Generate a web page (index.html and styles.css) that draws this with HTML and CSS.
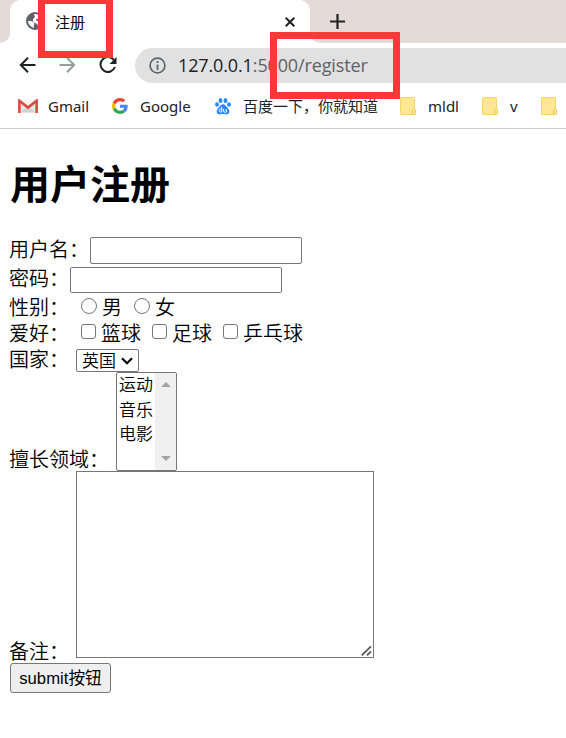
FILE: index.html
```
<!DOCTYPE html>
<html lang="zh-CN">
<head>
<meta charset="utf-8">
<title>注册</title>
<link rel="stylesheet" href="styles.css">
</head>
<body>
<header class="browser">
  <div class="tabs">
    <div class="tab-edge left"></div>
    <div class="tab">
      <svg class="globe" width="18" height="18" viewBox="0 0 18 18"><circle cx="9" cy="9" r="9" fill="#5f6368"/><path d="M2 9c3 0 5 0 6 2s-1 2 0 5c-3-1-6-4-6-7zM9 2l5 1v2c-2 0-1 2-3 2s-1 2 1 2h4l-1 4-3 2c0-3-1-3-3-4s-3-3-1-5 0-2 0-4z" fill="#fff"/></svg>
      <span class="tab-title">注册</span>
      <svg class="close" width="10" height="10" viewBox="0 0 10 10"><path d="M.7.7l8.6 8.6M9.3.7L.7 9.3" stroke="#222" stroke-width="2"/></svg>
    </div>
    <div class="tab-edge right"></div>
    <svg class="plus" width="15" height="15" viewBox="0 0 15 15"><path d="M7.5 0v15M0 7.5h15" stroke="#222" stroke-width="2.2"/></svg>
  </div>
  <div class="toolbar">
    <svg width="17" height="16" viewBox="0 0 17 16" fill="none" stroke="#202124" stroke-width="2"><path d="M16.5 8H2M9 .8L1.8 8 9 15.2"/></svg>
    <svg width="17" height="16" viewBox="0 0 17 16" fill="none" stroke="#9b9c9e" stroke-width="2"><path d="M.5 8H15M8 .8L15.2 8 8 15.2"/></svg>
    <svg class="reload" width="18" height="18" viewBox="0 0 18 18"><path d="M14.8 4A7.4 7.4 0 1 0 15.9 11" fill="none" stroke="#202124" stroke-width="2"/><path d="M17.5 1v7h-7z" fill="#202124"/></svg>
    <div class="address">
      <svg width="17" height="17" viewBox="0 0 17 17"><circle cx="8.5" cy="8.5" r="7.4" fill="none" stroke="#5f6368" stroke-width="1.7"/><path d="M8.5 7.5V13M8.5 4v2" stroke="#5f6368" stroke-width="1.8"/></svg>
      <span class="url"><b>127.0.0.1</b>:5000/register</span>
    </div>
  </div>
  <nav class="bookmarks">
    <svg class="gmail" width="20" height="14" viewBox="0 0 20 14"><path d="M3 1h14v13H3z" fill="#e5e5e5"/><path d="M3 13l7-6 7 6z" fill="#d2d2d2"/><path d="M3 1h14l-7 6z" fill="#f4f4f4"/><path d="M1.4 14V1.8L10 8.6l8.6-6.8V14" fill="none" stroke="#dc4a3f" stroke-width="2.6"/></svg>
    <span class="gmail-text">Gmail</span>
    <svg class="google" width="16" height="16" viewBox="0 0 48 48"><path fill="#EA4335" d="M24 9.5c3.5 0 6.700 1.200 9.200 3.600l6.900-6.900C35.900 2.400 30.500 0 24 0 14.600 0 6.500 5.400 2.600 13.200l8 6.200C12.400 13.700 17.700 9.500 24 9.500z"/><path fill="#4285F4" d="M47 24.600c0-1.600-.2-3.100-.4-4.600H24v9h12.900c-.6 3-2.200 5.500-4.700 7.200l7.700 6C44.400 38 47 31.800 47 24.600z"/><path fill="#FBBC05" d="M10.500 28.600a14.500 14.500 0 0 1 0-9.200l-8-6.200a24 24 0 0 0 0 21.600z"/><path fill="#34A853" d="M24 48c6.500 0 11.900-2.100 15.900-5.800l-7.700-6c-2.200 1.500-4.900 2.300-8.200 2.300-6.300 0-11.600-4.200-13.500-9.900l-8 6.200C6.500 42.600 14.600 48 24 48z"/></svg>
    <span class="google-text">Google</span>
    <svg class="baidu" width="16" height="17" viewBox="0 0 16 17" fill="#2989f7"><ellipse cx="5.500" cy="2.500" rx="1.900" ry="2.500"/><ellipse cx="10.500" cy="2.500" rx="1.900" ry="2.500"/><ellipse cx="2" cy="6.500" rx="1.900" ry="2.300"/><ellipse cx="14" cy="6.500" rx="1.900" ry="2.300"/><path d="M8 6.300c2 0 3 2 4.500 3.500 3.200 3.200 1.800 6.700-1 6.700-1.500 0-2-.4-3.500-.4s-2 .4-3.500.4c-2.800 0-4.200-3.500-1-6.700C5 8.300 6 6.300 8 6.300z"/><path d="M6.700 9v5H5.500a1.400 1.400 0 0 1 0-2.900h1M8.600 11v2.300q0 .8.800.8h1.900V11" fill="none" stroke="#fff" stroke-width="1"/></svg>
    <span class="baidu-text">百度一下，你就知道</span>
    <svg class="folder" width="16" height="18" viewBox="0 0 16 18"><path d="M1 .5h12.500q1 0 1 1V17.500H1q-.5 0-.5-.5V1q0-.5.500-.5z" fill="#ffe793" stroke="#f6d665"/><path d="M12.500 17.500v-4q0-1 1-1h1q1 0 1 1v3q0 1-1 1z" fill="#ffe793" stroke="#edc84d"/></svg>
    <span class="mldl-text">mldl</span>
    <svg class="folder" width="16" height="18" viewBox="0 0 16 18"><path d="M1 .5h12.500q1 0 1 1V17.500H1q-.5 0-.5-.5V1q0-.5.500-.5z" fill="#ffe793" stroke="#f6d665"/><path d="M12.500 17.500v-4q0-1 1-1h1q1 0 1 1v3q0 1-1 1z" fill="#ffe793" stroke="#edc84d"/></svg>
    <span class="v-text">v</span>
    <svg class="folder" width="16" height="18" viewBox="0 0 16 18"><path d="M1 .5h12.500q1 0 1 1V17.500H1q-.5 0-.5-.5V1q0-.5.500-.5z" fill="#ffe793" stroke="#f6d665"/><path d="M12.500 17.500v-4q0-1 1-1h1q1 0 1 1v3q0 1-1 1z" fill="#ffe793" stroke="#edc84d"/></svg>
  </nav>
</header>
<main>
  <h1>用户注册</h1>
  <form>
    <div class="row user"><label>用户名：</label><input class="field" type="text"></div>
    <div class="row password"><label>密码：</label><input class="field" type="password"></div>
    <div class="row gender"><label class="spaced">性别：</label><input class="choice radio" type="radio" name="sex"><span>男</span><input class="choice radio" type="radio" name="sex"><span>女</span></div>
    <div class="row hobby"><label class="spaced">爱好：</label><input class="choice" type="checkbox"><span>篮球</span><input class="choice" type="checkbox"><span>足球</span><input class="choice" type="checkbox"><span>乒乓球</span></div>
    <div class="row country"><label class="spaced">国家：</label><div class="select"><span>英国</span><svg width="12" height="8" viewBox="0 0 12 8"><path d="M1 1.200l5 5 5-5" fill="none" stroke="#000" stroke-width="2.200"/></svg></div></div>
    <div class="row skills"><label class="spaced">擅长领域：</label><div class="listbox"><div class="options"><span>运动</span><span>音乐</span><span>电影</span></div><div class="scroll"><svg width="10" height="5" viewBox="0 0 10 5"><path d="M0 5l5-5 5 5z" fill="#a3a3a3"/></svg><svg width="10" height="5" viewBox="0 0 10 5"><path d="M0 0l5 5 5-5z" fill="#a3a3a3"/></svg></div></div></div>
    <div class="row notes"><label class="spaced">备注：</label><div class="area"><svg width="11" height="11" viewBox="0 0 11 11"><path d="M.7 10.300l9.300-9M6 10.300l4-4" stroke="#555" stroke-width="1.700"/></svg></div></div>
    <button type="button">submit按钮</button>
  </form>
</main>
<div class="mark mark-title"></div>
<div class="mark mark-url"></div>
</body>
</html>
```
FILE: styles.css
```
* { box-sizing: border-box; }
body { margin: 0; width: 566px; height: 738px; overflow: hidden; position: relative; background: #fff; color: #000; font-family: "Noto Sans", "Noto Sans CJK SC", sans-serif; }
svg { display: block; flex: none; }
span, label { white-space: nowrap; }
.browser { height: 129px; border-bottom: 1px solid #cbcbcb; }
.tabs { height: 43px; display: flex; background: linear-gradient(#e4dad7 0 0) 320px 0 / 246px 43px no-repeat; }
.tab-edge { width: 10px; height: 43px; background: #e4dad7; flex: none; }
.tab-edge.left { border-bottom-right-radius: 10px; }
.tab-edge.right { border-bottom-left-radius: 10px; }
.tab { width: 300px; height: 43px; display: flex; align-items: center; padding: 0 15px 0 16px; background: radial-gradient(circle at 10px 10px, #fff 9.500px, #e4dad7 10px) 0 0 / 10px 10px no-repeat, radial-gradient(circle at 0 10px, #fff 9.500px, #e4dad7 10px) 100% 0 / 10px 10px no-repeat, #fff; }
.globe { margin-bottom: 1px; }
.tab-title { margin-left: 11px; font-size: 15px; line-height: 22px; padding-top: 1px; }
.close { margin-left: auto; }
.plus { margin: 14px 0 0 10px; }
.toolbar { height: 44px; display: flex; align-items: center; padding-left: 19px; }
.toolbar > svg { margin-bottom: 1px; }
.toolbar > svg + svg { margin-left: 23px; }
.address { margin-left: 18px; flex: 1; height: 35px; display: flex; align-items: center; background: #e1e1e1; border-radius: 18px 0 0 18px; padding-left: 14px; margin-top: 1px; }
.url { margin-left: 12px; padding-bottom: 2px; color: #606164; font-family: "Open Sans", sans-serif; font-size: 18px; letter-spacing: -.13px; }
.url b { font-weight: 400; color: #202124; }
.bookmarks { height: 39px; display: flex; align-items: center; padding: 0 0 1px 18px; font-size: 15px; color: #202124; }
.bookmarks span { margin-left: 10px; padding-bottom: 1px; flex: none; }
.gmail-text { width: 42px; }
.google { margin-left: 22px; }
.google-text { width: 53px; }
.bookmarks .google-text { margin-left: 12px; }
.baidu { margin-left: 22px; }
.bookmarks .baidu-text { width: 136px; margin-left: 12px; }
.baidu-text + .folder { margin-left: 21px; }
.bookmarks .mldl-text { width: 32px; margin-left: 12px; }
.mldl-text + .folder { margin-left: 22px; }
.bookmarks .v-text { width: 8px; margin-left: 12px; }
.v-text + .folder { margin-left: 23px; }
main { padding: 30px 10px 0; }
h1 { margin: 0 0 27px; height: 50px; font-size: 40px; line-height: 50px; font-weight: 700; }
form { font-size: 20px; font-weight: 350; }
.row { display: flex; align-items: center; line-height: 26px; }
label { flex: none; margin-left: -1px; margin-right: 1px; }
.spaced { margin-right: 7px; }
.user { height: 29px; }
.user label, .password label { padding-bottom: 2px; }
.password { height: 30px; }
.field { width: 212px; height: 27px; margin: 0; border: 1px solid #767676; border-radius: 2px; background: #fff; font-size: 16px; }
.password .field { height: 26px; }
.gender { height: 25px; }
.hobby { height: 27px; }
.choice { appearance: none; flex: none; width: 15px; height: 15px; margin: 0 5px 4px; border: 1px solid #767676; border-radius: 3px; background: #fff; }
.radio { border-radius: 50%; width: 16px; height: 16px; margin-left: 5px; }
.choice ~ .choice { margin-left: 11px; }
.radio ~ .radio { margin-left: 12px; }
.country { height: 25px; }
.select { width: 63px; height: 23px; margin-top: 2px; display: flex; align-items: center; justify-content: space-between; padding: 0 5px; border: 1px solid #767676; border-radius: 2px; font-size: 17px; line-height: 21px; }
.skills { height: 99px; align-items: flex-end; }
.skills .spaced { margin-bottom: -2px; }
.listbox { width: 61px; height: 99px; border: 1px solid #767676; border-radius: 2px; display: flex; }
.options { width: 38px; display: flex; flex-direction: column; padding-left: 2px; font-size: 17px; line-height: 24.500px; }
.scroll { width: 21px; background: #f0f0f0; display: flex; flex-direction: column; justify-content: space-between; align-items: center; padding: 9px 0; }
.notes { height: 187px; align-items: flex-end; }
.notes .spaced { margin-bottom: -7px; }
.area { width: 298px; height: 187px; border: 1px solid #767676; display: flex; align-items: flex-end; justify-content: flex-end; padding: 1px; }
button { display: block; margin-top: 5px; width: 101px; height: 30px; padding: 1px 0 0; border: 1px solid #767676; border-radius: 3px; background: #efefef; color: #000; font-family: "Liberation Sans", "Noto Sans CJK SC", sans-serif; font-size: 16.700px; line-height: 26px; white-space: nowrap; }
.mark { position: absolute; border: 7px solid #fb3838; }
.mark-title { left: 38px; top: -3px; width: 75px; height: 61px; }
.mark-url { left: 270px; top: 32px; width: 130px; height: 67px; }
```
